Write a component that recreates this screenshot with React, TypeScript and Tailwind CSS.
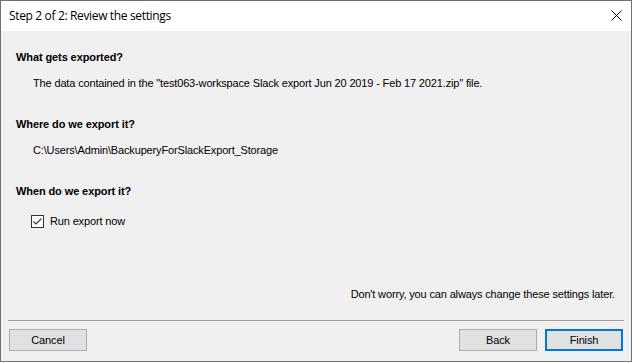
import React, { useState } from 'react';

const sans = "font-['Liberation_Sans',Arial,sans-serif]";

const WinButton = ({ label, isDefault }: { label: string; isDefault?: boolean }) => (
  <button
    className={`h-[22px] w-[78px] bg-[#e1e1e1] text-[11px] tracking-[-0.15px] text-black ${sans} ${
      isDefault ? 'border-2 border-[#0078d7]' : 'border border-[#adadad]'
    }`}
  >
    {label}
  </button>
);

const Section = ({ title, children }: { title: string; children: React.ReactNode }) => (
  <section>
    <h2 className="text-[11px] font-bold leading-[13px] tracking-[-0.1px] text-black">{title}</h2>
    <div className="mt-[13px] pl-[17px]">{children}</div>
  </section>
);

export default function App() {
  const [runNow, setRunNow] = useState(true);

  return (
    <div className={`flex h-[362px] w-[632px] flex-col border border-[#707070] bg-[#f0f0f0] ${sans}`}>
      {/* Title bar */}
      <header className="flex h-[30px] shrink-0 items-center justify-between bg-white pl-[8px] pr-[9px]">
        <span className="font-['Open_Sans',sans-serif] text-[12px] tracking-[-0.35px] text-black">
          Step 2 of 2: Review the settings
        </span>
        <svg width="11" height="11" viewBox="0 0 11 11" className="mb-[1px]">
          <path d="M0.5 0.5 L10.5 10.5 M10.5 0.5 L0.5 10.5" stroke="#000" strokeWidth="1" />
        </svg>
      </header>

      {/* Content */}
      <main className="flex flex-1 flex-col pl-[15px] pr-[16px] pt-[20px] text-[11px] leading-[13px] tracking-[-0.15px] text-black">
        <div className="flex flex-col gap-[28px]">
          <Section title="What gets exported?">
            <p>The data contained in the "test063-workspace Slack export Jun 20 2019 - Feb 17 2021.zip" file.</p>
          </Section>
          <Section title="Where do we export it?">
            <p>C:\Users\Admin\BackuperyForSlackExport_Storage</p>
          </Section>
          <Section title="When do we export it?">
            <label className="flex items-center gap-[6px] pt-[4px]">
              <span
                onClick={() => setRunNow(!runNow)}
                className="-ml-[2px] flex h-[13px] w-[13px] items-center justify-center border border-[#333] bg-white"
              >
                {runNow && (
                  <svg width="11" height="11" viewBox="0 0 11 11">
                    <path d="M1.5 5.5 L4 8 L9.5 2.5" stroke="#333" strokeWidth="1.1" fill="none" />
                  </svg>
                )}
              </span>
              <span>Run export now</span>
            </label>
          </Section>
        </div>
        <p className="mt-auto mb-[19px] text-right">Don't worry, you can always change these settings later.</p>
      </main>

      {/* Footer */}
      <footer className="shrink-0 px-[7px] pb-[10px]">
        <div className="border-t border-[#a0a0a0]" />
        <div className="mt-[8px] flex items-center px-[1px]">
          <WinButton label="Cancel" />
          <div className="ml-auto flex gap-[8px]">
            <WinButton label="Back" />
            <WinButton label="Finish" isDefault />
          </div>
        </div>
      </footer>
    </div>
  );
}
